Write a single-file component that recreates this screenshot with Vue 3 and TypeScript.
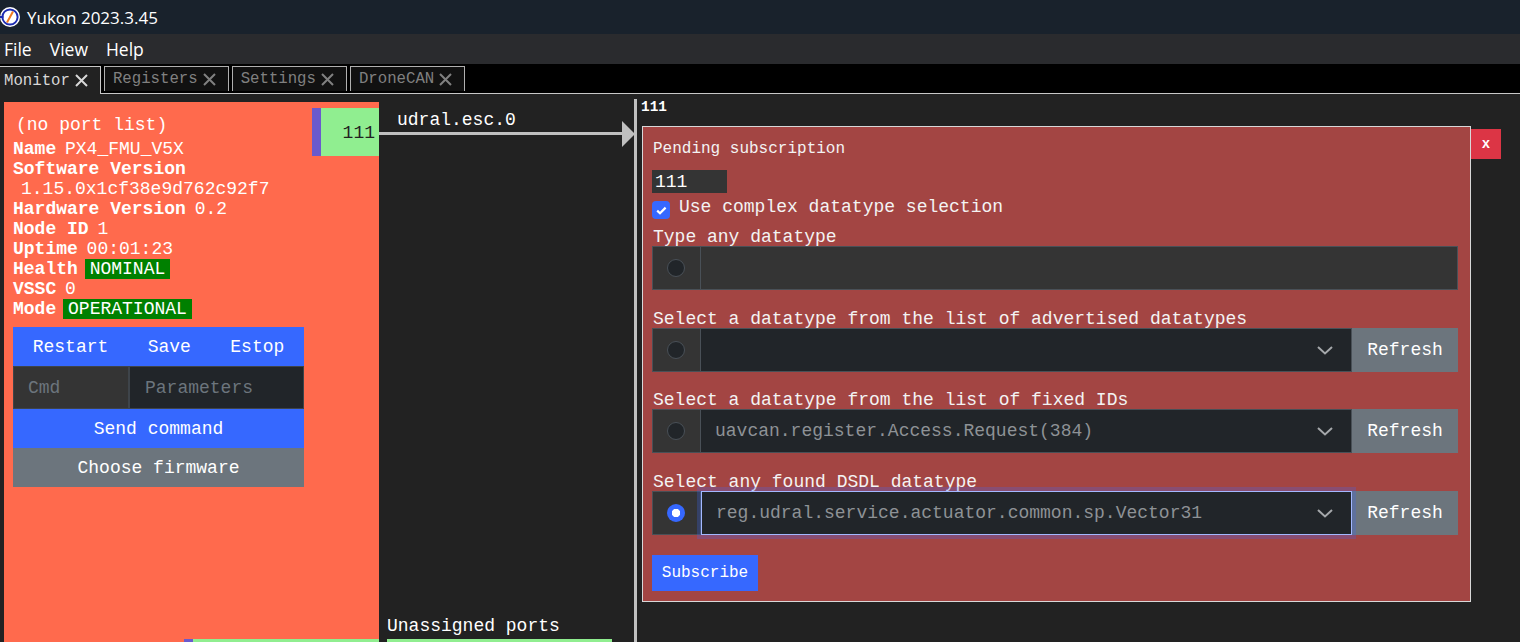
<script setup lang="ts">
interface Row {
  label: string
  value: string
  checked: boolean
  focused: boolean
}

const tabs = [
  { name: 'Monitor', active: true },
  { name: 'Registers', active: false },
  { name: 'Settings', active: false },
  { name: 'DroneCAN', active: false },
]

const menus = ['File', 'View', 'Help']

const rows: Row[] = [
  { label: 'Select a datatype from the list of advertised datatypes', value: '', checked: false, focused: false },
  { label: 'Select a datatype from the list of fixed IDs', value: 'uavcan.register.Access.Request(384)', checked: false, focused: false },
  { label: 'Select any found DSDL datatype', value: 'reg.udral.service.actuator.common.sp.Vector31', checked: true, focused: true },
]
</script>

<template>
  <div class="app">
    <div class="titlebar">
      <svg class="logo" width="20" height="20" viewBox="0 0 20 20">
        <circle cx="10" cy="10" r="10" fill="#fff" />
        <circle cx="10" cy="10" r="8.6" fill="#1c2bb0" />
        <circle cx="10" cy="10" r="6.6" fill="#fff" />
        <path d="M7 15.5 L13 4.5" stroke="#f07a20" stroke-width="2" />
        <path d="M0 10 H3.5" stroke="#1c2bb0" stroke-width="2" />
      </svg>
      <span>Yukon 2023.3.45</span>
    </div>
    <div class="menubar">
      <span v-for="m in menus" :key="m">{{ m }}</span>
    </div>
    <div class="tabs">
      <div v-for="t in tabs" :key="t.name" class="tab" :class="{ active: t.active }">
        {{ t.name }}
        <svg width="13" height="13" viewBox="0 0 13 13">
          <path d="M1 1 L12 12 M12 1 L1 12" stroke="currentColor" stroke-width="2" />
        </svg>
      </div>
    </div>

    <div class="canvas">
      <div class="node">
        <div class="no-ports">(no port list)</div>
        <div class="info">
          <div><b>Name</b> PX4_FMU_V5X</div>
          <div><b>Software Version</b></div>
          <div class="indent">1.15.0x1cf38e9d762c92f7</div>
          <div><b>Hardware Version</b> 0.2</div>
          <div><b>Node ID</b> 1</div>
          <div><b>Uptime</b> 00:01:23</div>
          <div><b>Health</b> <span class="badge">NOMINAL</span></div>
          <div><b>VSSC</b> 0</div>
          <div><b>Mode</b> <span class="badge">OPERATIONAL</span></div>
        </div>
        <div class="actions">
          <div class="btn-row">
            <button class="btn primary">Restart</button>
            <button class="btn primary">Save</button>
            <button class="btn primary">Estop</button>
          </div>
          <div class="cmd-row">
            <input class="cmd" placeholder="Cmd" />
            <input class="params" placeholder="Parameters" />
          </div>
          <button class="btn primary wide">Send command</button>
          <button class="btn secondary wide">Choose firmware</button>
        </div>
      </div>

      <div class="port port-top"><span>111</span></div>
      <div class="port port-bottom"></div>

      <div class="link-label">udral.esc.0</div>
      <div class="link"></div>
      <div class="arrow"></div>
      <div class="divider"></div>

      <div class="unassigned">Unassigned ports</div>
      <div class="unassigned-bar"></div>

      <div class="sub-id">111</div>

      <div class="modal">
        <div class="modal-title">Pending subscription</div>
        <input class="id-input" value="111" />
        <div class="check-line">
          <span class="check">
            <svg width="11" height="9" viewBox="0 0 11 9">
              <path d="M1.2 4.6 L4 7.2 L9.6 1.6" fill="none" stroke="#fff" stroke-width="2.2" />
            </svg>
          </span>
          <span class="check-text">Use complex datatype selection</span>
        </div>

        <div class="field-label first">Type any datatype</div>
        <div class="group">
          <div class="radio-cell"><span class="radio"></span></div>
          <input class="text-field" />
        </div>

        <template v-for="r in rows" :key="r.label">
          <div class="field-label">{{ r.label }}</div>
          <div class="group">
            <div class="radio-cell"><span class="radio" :class="{ on: r.checked }"></span></div>
            <div class="select" :class="{ focused: r.focused }">
              <span>{{ r.value }}</span>
              <svg width="18" height="12" viewBox="0 0 18 12">
                <path d="M2 3 L9 9.5 L16 3" fill="none" stroke="#a5a8ab" stroke-width="2" />
              </svg>
            </div>
            <button class="btn secondary refresh">Refresh</button>
          </div>
        </template>

        <button class="btn primary subscribe">Subscribe</button>
      </div>
      <button class="close">x</button>
    </div>
  </div>
</template>

<style>
html,
body {
  margin: 0;
  background: #222;
  overflow: hidden;
}
</style>

<style scoped>
.app {
  width: 1520px;
  height: 642px;
  display: flex;
  flex-direction: column;
  background: #222;
  color: #fff;
  font-family: "Liberation Mono", monospace;
  overflow: hidden;
}

.titlebar {
  height: 34px;
  flex: none;
  display: flex;
  align-items: center;
  gap: 7px;
  background: #19222c;
  font-family: "Open Sans", sans-serif;
  font-size: 17px;
}

.menubar {
  height: 30px;
  flex: none;
  display: flex;
  align-items: center;
  gap: 18px;
  padding-left: 4px;
  background: #2a2b2e;
  font-family: "Open Sans", sans-serif;
  font-size: 17.5px;
}

.tabs {
  height: 30px;
  flex: none;
  display: flex;
  align-items: flex-start;
  gap: 3px;
  padding-top: 2px;
  box-sizing: border-box;
  background: #000;
  border-bottom: 1px solid #c8c8c8;
}

.tab {
  height: 25px;
  display: flex;
  align-items: center;
  gap: 5px;
  padding: 0 12px 0 8px;
  box-sizing: border-box;
  font-size: 15.7px;
  color: #808080;
  background: #111;
  border: 1px solid #b0b0b0;
  border-bottom: none;
}

.tab.active {
  height: 28px;
  padding: 0 12px 0 4px;
  color: #d8d8d8;
  background: #222;
  border-left: none;
  border-color: #c8c8c8;
  position: relative;
  z-index: 1;
}

.canvas {
  position: relative;
  flex: 1;
  overflow: hidden;
}

.node {
  position: absolute;
  left: 4px;
  top: 8px;
  width: 375px;
  height: 540px;
  padding: 13px 0 0 9px;
  box-sizing: border-box;
  background: #ff6a4d;
  font-size: 18px;
}

.no-ports {
  padding-left: 3px;
  line-height: 20px;
}

.info {
  margin-top: 4px;
  line-height: 20px;
  word-spacing: -2px;
}

.info b {
  font-weight: 700;
  word-spacing: 0;
}

.indent {
  padding-left: 8px;
}

.badge {
  display: inline-block;
  margin-left: -2px;
  padding: 0 5px;
  background: #008000;
}

.actions {
  width: 291px;
  margin-top: 8px;
  display: flex;
  flex-direction: column;
}

.btn {
  border: none;
  color: #fff;
  font-family: "Liberation Mono", monospace;
  font-size: 18px;
  cursor: pointer;
}

.primary {
  background: #3668ff;
}

.secondary {
  background: #6c757d;
}

.btn-row {
  display: flex;
  height: 39px;
}

.btn-row .btn {
  flex: auto;
  padding: 0;
}

.wide {
  height: 39px;
  padding: 0;
}

.cmd-row {
  display: flex;
  height: 43px;
}

.cmd-row input {
  box-sizing: border-box;
  height: 100%;
  border: 1px solid #3e444a;
  color: #fff;
  font-family: "Liberation Mono", monospace;
  font-size: 18px;
  outline: none;
}

.cmd-row input::placeholder {
  color: #6c757d;
}

.cmd {
  width: 116px;
  padding: 0 14px;
  background: #343434;
}

.params {
  width: 175px;
  padding: 0 15px;
  background: #212529;
}

.port {
  position: absolute;
  background: #90ee90;
  border-left: 9px solid #6a5acd;
  box-sizing: border-box;
}

.port-top {
  left: 312px;
  top: 14px;
  width: 67px;
  height: 48px;
  color: #222;
  font-size: 18px;
  text-align: right;
  padding: 15px 4px 0 0;
}

.port-bottom {
  left: 184px;
  top: 545px;
  width: 195px;
  height: 3px;
}

.link-label {
  position: absolute;
  left: 397px;
  top: 16px;
  font-size: 18px;
  line-height: 20px;
}

.link {
  position: absolute;
  left: 379px;
  top: 38px;
  width: 245px;
  height: 3px;
  background: #c0c0c0;
}

.arrow {
  position: absolute;
  left: 622px;
  top: 27px;
  border-left: 13px solid #c0c0c0;
  border-top: 13px solid transparent;
  border-bottom: 13px solid transparent;
}

.divider {
  position: absolute;
  left: 634px;
  top: 5px;
  width: 3px;
  height: 543px;
  background: #c0c0c0;
}

.unassigned {
  position: absolute;
  left: 387px;
  top: 522px;
  font-size: 18px;
  line-height: 20px;
}

.unassigned-bar {
  position: absolute;
  left: 387px;
  top: 545px;
  width: 225px;
  height: 3px;
  background: #90ee90;
}

.sub-id {
  position: absolute;
  left: 641px;
  top: 6px;
  font-size: 14.4px;
  font-weight: 700;
  line-height: 15px;
}

.modal {
  position: absolute;
  left: 642px;
  top: 32px;
  width: 829px;
  height: 476px;
  padding: 12px 12px 0 9px;
  box-sizing: border-box;
  background: #a34543;
  border: 1px solid #d8d8d8;
  display: flex;
  flex-direction: column;
  align-items: flex-start;
}

.modal-title {
  padding-left: 1px;
  font-size: 16px;
  line-height: 20px;
  color: #f3f3f3;
}

.id-input {
  width: 75px;
  height: 23px;
  margin-top: 11px;
  padding: 0 3px;
  box-sizing: border-box;
  border: none;
  background: #343434;
  color: #fff;
  font-family: "Liberation Mono", monospace;
  font-size: 18px;
  outline: none;
}

.check-line {
  display: flex;
  align-items: flex-start;
  gap: 9px;
  margin-top: 3px;
  font-size: 18px;
  line-height: 20px;
  color: #f3f3f3;
}

.check {
  width: 18px;
  height: 18px;
  margin-top: 5px;
  display: flex;
  align-items: center;
  justify-content: center;
  background: #3668ff;
  border-radius: 4px;
}

.check-text {
  margin-top: 1px;
}

.field-label {
  margin-top: 19.67px;
  padding-left: 1px;
  font-size: 18px;
  line-height: 18px;
  color: #f3f3f3;
}

.field-label.first {
  margin-top: 9px;
}

.group {
  width: 806px;
  height: 44px;
  display: flex;
}

.radio-cell {
  width: 49px;
  flex: none;
  display: flex;
  align-items: center;
  justify-content: center;
  padding-right: 1px;
  box-sizing: border-box;
  background: #343434;
  border: 1px solid #495057;
}

.radio {
  width: 18px;
  height: 18px;
  box-sizing: border-box;
  border-radius: 50%;
  background: #212529;
  border: 1px solid #495057;
}

.radio.on {
  background: #3668ff radial-gradient(circle, #fff 0 4px, transparent 4.5px);
  border: none;
}

.text-field {
  flex: 1;
  box-sizing: border-box;
  background: #343434;
  border: 1px solid #495057;
  border-left: none;
  outline: none;
}

.select {
  flex: 1;
  display: flex;
  align-items: center;
  justify-content: space-between;
  padding: 0 17px 0 14px;
  box-sizing: border-box;
  background: #212529;
  border: 1px solid #495057;
  border-left: none;
  color: #8e9296;
  font-size: 18px;
}

.select.focused {
  border: 1px solid #a3b8ff;
  box-shadow: 0 0 0 4px rgba(54, 104, 255, 0.25);
  position: relative;
}

.refresh {
  width: 106px;
  flex: none;
  padding: 0;
}

.subscribe {
  width: 106px;
  height: 36px;
  margin-top: 20px;
  padding: 0;
  font-size: 16px;
}

.close {
  position: absolute;
  left: 1471px;
  top: 35px;
  width: 30px;
  height: 30px;
  padding: 0;
  border: none;
  background: #dc3545;
  color: #fff;
  font-family: "Liberation Mono", monospace;
  font-size: 14px;
  font-weight: 700;
}
</style>
